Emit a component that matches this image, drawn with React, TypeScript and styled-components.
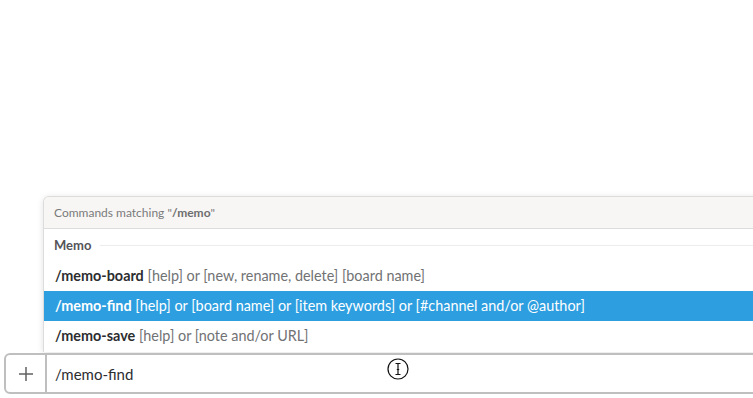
import styled, { createGlobalStyle } from "styled-components";

const GlobalStyle = createGlobalStyle`
  html, body {
    margin: 0;
    padding: 0;
    background: #ffffff;
    overflow: hidden;
  }
  body {
    font-family: Lato, "Liberation Sans", sans-serif;
  }
`;

const commands = [
  { name: "/memo-board", args: "[help] or [new, rename, delete] [board name]" },
  {
    name: "/memo-find",
    args: "[help] or [board name] or [item keywords] or [#channel and/or @author]",
  },
  { name: "/memo-save", args: "[help] or [note and/or URL]" },
];

const App = () => {
  const active = "/memo-find";
  return (
    <>
      <GlobalStyle />
      <Screen>
        <Footer>
          <Menu>
            <MenuHeader>
              <span>
                Commands matching "<b>/memo</b>"
              </span>
              <Hint>tab or ↑ ↓ to navigate</Hint>
            </MenuHeader>
            <Section>
              <SectionTitle>Memo</SectionTitle>
              <SectionLine />
            </Section>
            {commands.map((c) => (
              <Row key={c.name} selected={c.name === active}>
                <CmdName>{c.name}</CmdName> {c.args}
              </Row>
            ))}
          </Menu>
          <InputBox>
            <PlusButton>
              <svg width="16" height="16" viewBox="0 0 16 16">
                <path d="M8 1v14M1 8h14" stroke="#616161" strokeWidth="1.5" />
              </svg>
            </PlusButton>
            <InputText>/memo-find</InputText>
            <Cursor>
              <svg width="22" height="22" viewBox="0 0 22 22">
                <circle cx="11" cy="11" r="10" fill="#fff" stroke="#111" strokeWidth="1.2" />
                <path
                  d="M8.5 5.5h5M8.5 16.5h5M11 5.5v11M9.8 11.5h2.4"
                  stroke="#111"
                  strokeWidth="1.2"
                  fill="none"
                />
              </svg>
            </Cursor>
          </InputBox>
        </Footer>
      </Screen>
    </>
  );
};

const Screen = styled.div`
  width: 753px;
  height: 398px;
  display: flex;
  flex-direction: column;
  justify-content: flex-end;
  overflow: hidden;
`;

const Footer = styled.div`
  display: flex;
  flex-direction: column;
  padding: 0 0 4px 4px;
`;

const Menu = styled.div`
  margin-left: 39px;
  width: 790px;
  padding-bottom: 1px;
  margin-bottom: 1px;
  border: 1px solid #dcdcdc;
  border-bottom: none;
  border-radius: 6px 6px 0 0;
  background: #fff;
  box-shadow: 0 1px 6px rgba(0, 0, 0, 0.12);
  overflow: hidden;
`;

const MenuHeader = styled.div`
  height: 31px;
  display: flex;
  align-items: center;
  justify-content: space-between;
  padding: 0 10px;
  background: #f7f6f4;
  border-bottom: 1px solid #dddddd;
  font-size: 12px;
  color: #7a7a7c;
  b {
    font-weight: 700;
    color: #6e6e70;
  }
`;

const Hint = styled.span`
  margin-left: auto;
  padding-left: 20px;
  width: 42px;
  white-space: nowrap;
  overflow: hidden;
  flex-shrink: 0;
`;

const Section = styled.div`
  height: 32px;
  display: flex;
  align-items: center;
  padding: 0 0 0 10px;
  gap: 9px;
`;

const SectionTitle = styled.span`
  font-size: 13px;
  font-weight: 700;
  color: #555459;
`;

const SectionLine = styled.div`
  flex: 1;
  height: 1px;
  background: #ececec;
`;

const Row = styled.div<{ selected: boolean }>`
  height: 30px;
  line-height: 30px;
  padding: 0 11px;
  font-size: 14.4px;
  white-space: nowrap;
  background: ${(p) => (p.selected ? "#2d9ee0" : "#fff")};
  color: ${(p) => (p.selected ? "#ffffff" : "#717274")};
  b {
    color: ${(p) => (p.selected ? "#ffffff" : "#2c2d30")};
  }
`;

const CmdName = styled.b`
  font-weight: 700;
`;

const InputBox = styled.div`
  position: relative;
  height: 37px;
  width: 800px;
  display: flex;
  align-items: stretch;
  border: 2px solid #bfbfbf;
  border-radius: 6px;
  background: #fff;
`;

const PlusButton = styled.div`
  width: 39px;
  display: flex;
  align-items: center;
  justify-content: center;
  border-right: 2px solid #bfbfbf;
`;

const InputText = styled.div`
  display: flex;
  align-items: center;
  padding-left: 8px;
  font-size: 15px;
  color: #2c2d30;
`;

const Cursor = styled.div`
  position: absolute;
  left: 381px;
  top: 3px;
  width: 22px;
  height: 22px;
`;

export default App;
